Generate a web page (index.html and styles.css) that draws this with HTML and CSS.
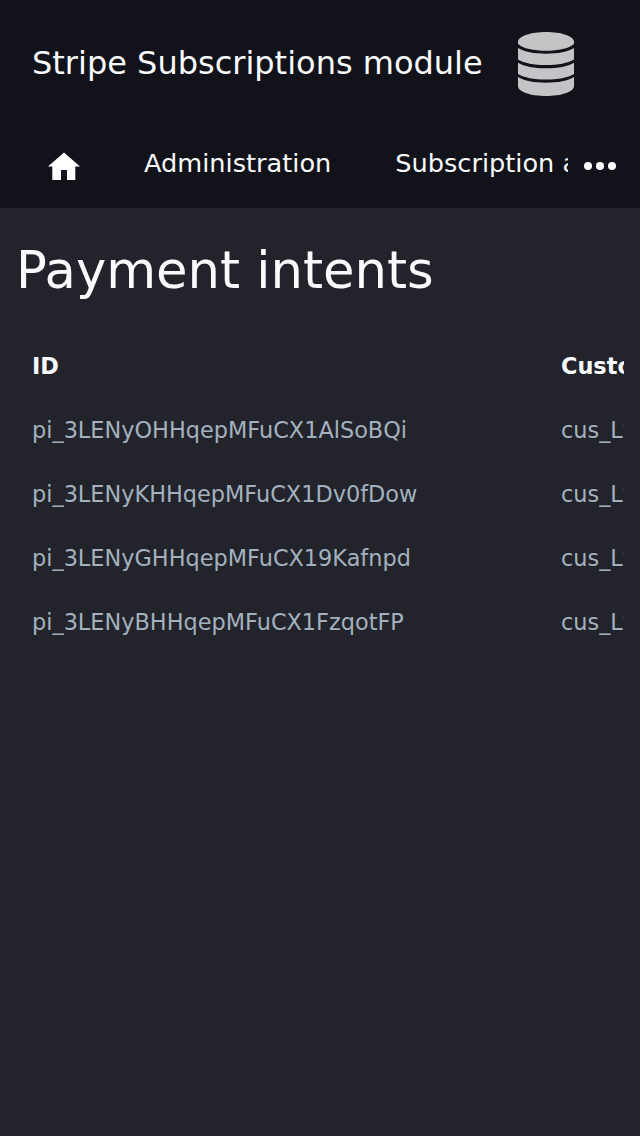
FILE: index.html
```html
<!DOCTYPE html>
<html lang="en">
<head>
<meta charset="utf-8">
<title>Stripe Subscriptions module</title>
<link rel="stylesheet" href="styles.css">
</head>
<body>
<header class="header">
  <div class="brand">
    <span class="brand-name">Stripe Subscriptions module</span>
    <svg class="logo" viewBox="0 0 56 64" fill="#c4c4c6">
      <path d="M0 10C0 4 13 0 28 0S56 4 56 10V12C51 16.500 40 18.800 28 18.800S5 16.500 0 12Z"/>
      <path d="M0 16C6 19.800 16 21.700 28 21.700S50 19.800 56 16V27.500C50 31.200 40 33 28 33S6 31.200 0 27.500Z"/>
      <path d="M0 30.700C6 34.400 16 36.200 28 36.200S50 34.400 56 30.700V42C50 45.700 40 47.500 28 47.500S6 45.700 0 42Z"/>
      <path d="M0 45C6 48.800 16 50.700 28 50.700S50 48.800 56 45V54C56 60 43 64 28 64S0 60 0 54Z"/>
    </svg>
  </div>
  <nav class="nav">
    <div class="nav-items">
      <a class="home" aria-label="Home"><svg viewBox="0 0 32 28" fill="#fff"><path d="M16 .5L32 14.500H27.300V28H19V18H13V28H4.300V14.500H0Z"/></svg></a>
      <a class="nav-link">Administration</a>
      <a class="nav-link">Subscription administration</a>
    </div>
    <a class="more" aria-label="More"><svg viewBox="0 0 32 8" fill="#fff"><circle cx="4" cy="4" r="4"/><circle cx="16" cy="4" r="4"/><circle cx="28" cy="4" r="4"/></svg></a>
  </nav>
</header>
<main class="main">
  <h1 class="title">Payment intents</h1>
  <div class="table-wrap">
    <table class="table">
      <thead><tr><th class="id-col">ID</th><th>Customer</th></tr></thead>
      <tbody>
        <tr><td>pi_3LENyOHHqepMFuCX1AlSoBQi</td><td>cus_Lw</td></tr>
        <tr><td>pi_3LENyKHHqepMFuCX1Dv0fDow</td><td>cus_Lw</td></tr>
        <tr><td>pi_3LENyGHHqepMFuCX19Kafnpd</td><td>cus_Lw</td></tr>
        <tr><td>pi_3LENyBHHqepMFuCX1FzqotFP</td><td>cus_Lw</td></tr>
      </tbody>
    </table>
  </div>
</main>
</body>
</html>
```
FILE: styles.css
```css
* { box-sizing: border-box; }
body { margin: 0; min-height: 1136px; background: #22232b; color: #f9fafc; font-family: "DejaVu Sans", sans-serif; overflow-x: hidden; }
.header { height: 208px; background: #11121a; }
.brand { display: flex; align-items: center; height: 128px; padding-left: 32px; }
.brand-name { padding-bottom: 2px; font-size: 32px; line-height: 40px; white-space: nowrap; }
.logo { width: 56px; height: 64px; margin-left: 35px; }
.nav { display: flex; height: 80px; }
.nav-items { display: flex; width: 568px; overflow: hidden; white-space: nowrap; }
.home { flex: none; width: 112px; padding: 24px 0 0 48px; }
.home svg { display: block; width: 32px; height: 28px; }
.nav-link { flex: none; padding: 15px 32px; font-size: 25.600px; line-height: 40px; }
.more { padding: 34px 0 0 16px; }
.more svg { display: block; width: 32px; height: 8px; }
.main { padding: 31px 16px 0; }
.title { margin: 0 0 33px; font-size: 51.200px; font-weight: 400; line-height: 62px; }
.table-wrap { overflow: hidden; }
.table { width: 900px; table-layout: fixed; border-collapse: collapse; font-size: 22.400px; white-space: nowrap; }
.table th, .table td { height: 64px; padding: 0 16px; text-align: left; vertical-align: middle; }
.table .id-col { width: 529px; }
.table td { color: #a3b1bf; }
```
